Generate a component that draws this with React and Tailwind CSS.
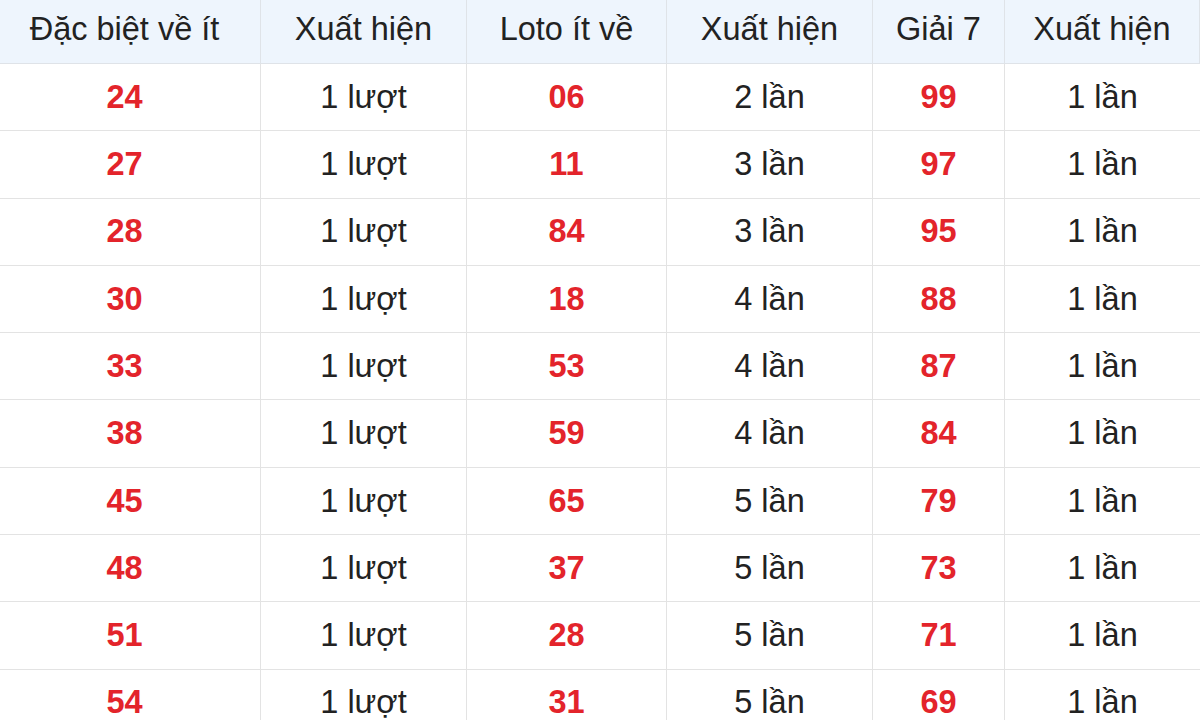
const headers = ['Đặc biệt về ít', 'Xuất hiện', 'Loto ít về', 'Xuất hiện', 'Giải 7', 'Xuất hiện'];

const rows = [
  ['24', '1 lượt', '06', '2 lần', '99', '1 lần'],
  ['27', '1 lượt', '11', '3 lần', '97', '1 lần'],
  ['28', '1 lượt', '84', '3 lần', '95', '1 lần'],
  ['30', '1 lượt', '18', '4 lần', '88', '1 lần'],
  ['33', '1 lượt', '53', '4 lần', '87', '1 lần'],
  ['38', '1 lượt', '59', '4 lần', '84', '1 lần'],
  ['45', '1 lượt', '65', '5 lần', '79', '1 lần'],
  ['48', '1 lượt', '37', '5 lần', '73', '1 lần'],
  ['51', '1 lượt', '28', '5 lần', '71', '1 lần'],
  ['54', '1 lượt', '31', '5 lần', '69', '1 lần'],
];

function App() {
  return (
    <div className="w-[1200px] h-[720px] overflow-hidden bg-white font-['Liberation_Sans',Arial,sans-serif] text-[32.5px] text-[#222]">
      <div className="-ml-[11px] grid grid-cols-[272px_206px_200px_206px_132px_195px]">
        {headers.map((h, i) => (
          <div
            key={i}
            className="h-[64px] pb-[4px] flex items-center justify-center bg-[#eef5fd] border-b border-r border-[#dfe3e8] last:border-r-0"
          >
            {h}
          </div>
        ))}
        {rows.map((r, ri) =>
          r.map((c, ci) => (
            <div
              key={ri + '-' + ci}
              className={`h-[67.3px] flex items-center justify-center border-b border-r border-[#e3e3e3] ${
                ci === 5 ? 'border-r-0' : ''
              } ${ci % 2 === 0 ? 'font-bold text-[#e3242b]' : ''}`}
            >
              {c}
            </div>
          ))
        )}
      </div>
    </div>
  );
}

export default App;
